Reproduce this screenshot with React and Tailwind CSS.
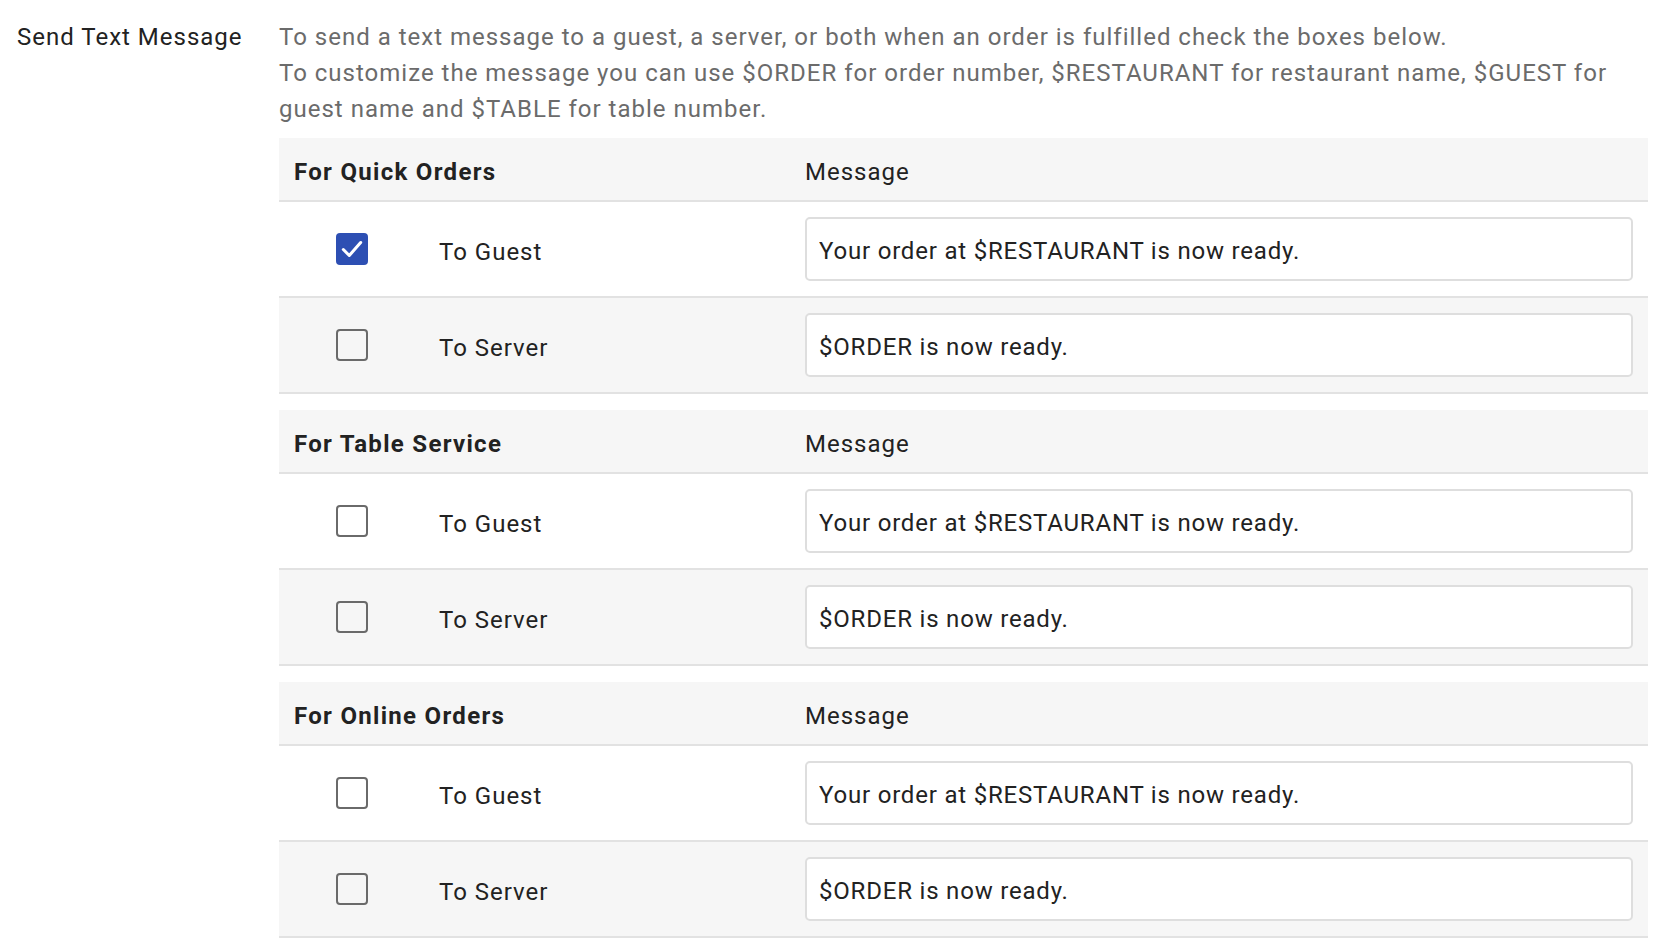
import React, { useState } from 'react';

const SECTIONS = [
    { title: 'For Quick Orders', checked: [true, false] },
    { title: 'For Table Service', checked: [false, false] },
    { title: 'For Online Orders', checked: [false, false] },
];

const ROWS = [
    { label: 'To Guest', message: 'Your order at $RESTAURANT is now ready.' },
    { label: 'To Server', message: '$ORDER is now ready.' },
];

const Checkbox = ({ checked, onChange }) => (
    <button
        type="button"
        onClick={onChange}
        className={`w-8 h-8 rounded-[4px] flex items-center justify-center shrink-0 ${checked ? 'bg-[#2d4fb3]' : 'border-2 border-[#6a6a6a] bg-transparent'}`}
    >
        {checked && (
            <svg viewBox="0 0 24 24" className="w-[26px] h-[26px]" fill="none" stroke="white" strokeWidth="2.8" strokeLinecap="round" strokeLinejoin="round">
                <polyline points="4 12.5 9.5 18 20 6" />
            </svg>
        )}
    </button>
);

const Section = ({ title, initial }) => {
    const [checked, setChecked] = useState(initial);

    return (
        <div>
            {/* Section header */}
            <div className="h-16 grid grid-cols-[526px_1fr] items-center bg-[#f6f6f6] border-b-2 border-[#e2e2e2]">
                <span className="pl-[15px] pt-[6px] font-bold tracking-[1.3px] text-[#222]">{title}</span>
                <span className="pt-[6px] text-[#222]">Message</span>
            </div>

            {ROWS.map((row, idx) => (
                <div
                    key={row.label}
                    className={`h-24 grid grid-cols-[526px_1fr] items-center border-b-2 border-[#e2e2e2] ${idx % 2 === 1 ? 'bg-[#f6f6f6]' : 'bg-white'}`}
                >
                    <div className="flex items-center pl-[57px]">
                        <Checkbox
                            checked={checked[idx]}
                            onChange={() => setChecked(c => c.map((v, i) => (i === idx ? !v : v)))}
                        />
                        <span className="ml-[71px] pt-[5px] text-[#222]">{row.label}</span>
                    </div>
                    <div className="pr-[15px]">
                        <input
                            defaultValue={row.message}
                            className="w-full h-16 px-3 pt-[3px] bg-white border-2 border-[#dedede] rounded-[5px] text-[#222] tracking-[0.8px] outline-none"
                        />
                    </div>
                </div>
            ))}
        </div>
    );
};

export default function App() {
    return (
        <div className="min-h-screen bg-white text-[24px] leading-9 tracking-[1px] pt-[19px] pr-[18px] flex" style={{ fontFamily: 'Roboto, "Liberation Sans", sans-serif' }}>
            <div className="w-[279px] shrink-0 pl-[17px] text-[#222]">Send Text Message</div>

            <div className="flex-1 min-w-0">
                <p className="text-[#6b6b6b] tracking-[1px]">
                    To send a text message to a guest, a server, or both when an order is fulfilled check the boxes below.
                    <br />
                    To customize the message you can use $ORDER for order number, $RESTAURANT for restaurant name, $GUEST for guest name and $TABLE for table number.
                </p>

                <div className="mt-[11px] flex flex-col gap-4">
                    {SECTIONS.map(s => (
                        <Section key={s.title} title={s.title} initial={s.checked} />
                    ))}
                </div>
            </div>
        </div>
    );
}
